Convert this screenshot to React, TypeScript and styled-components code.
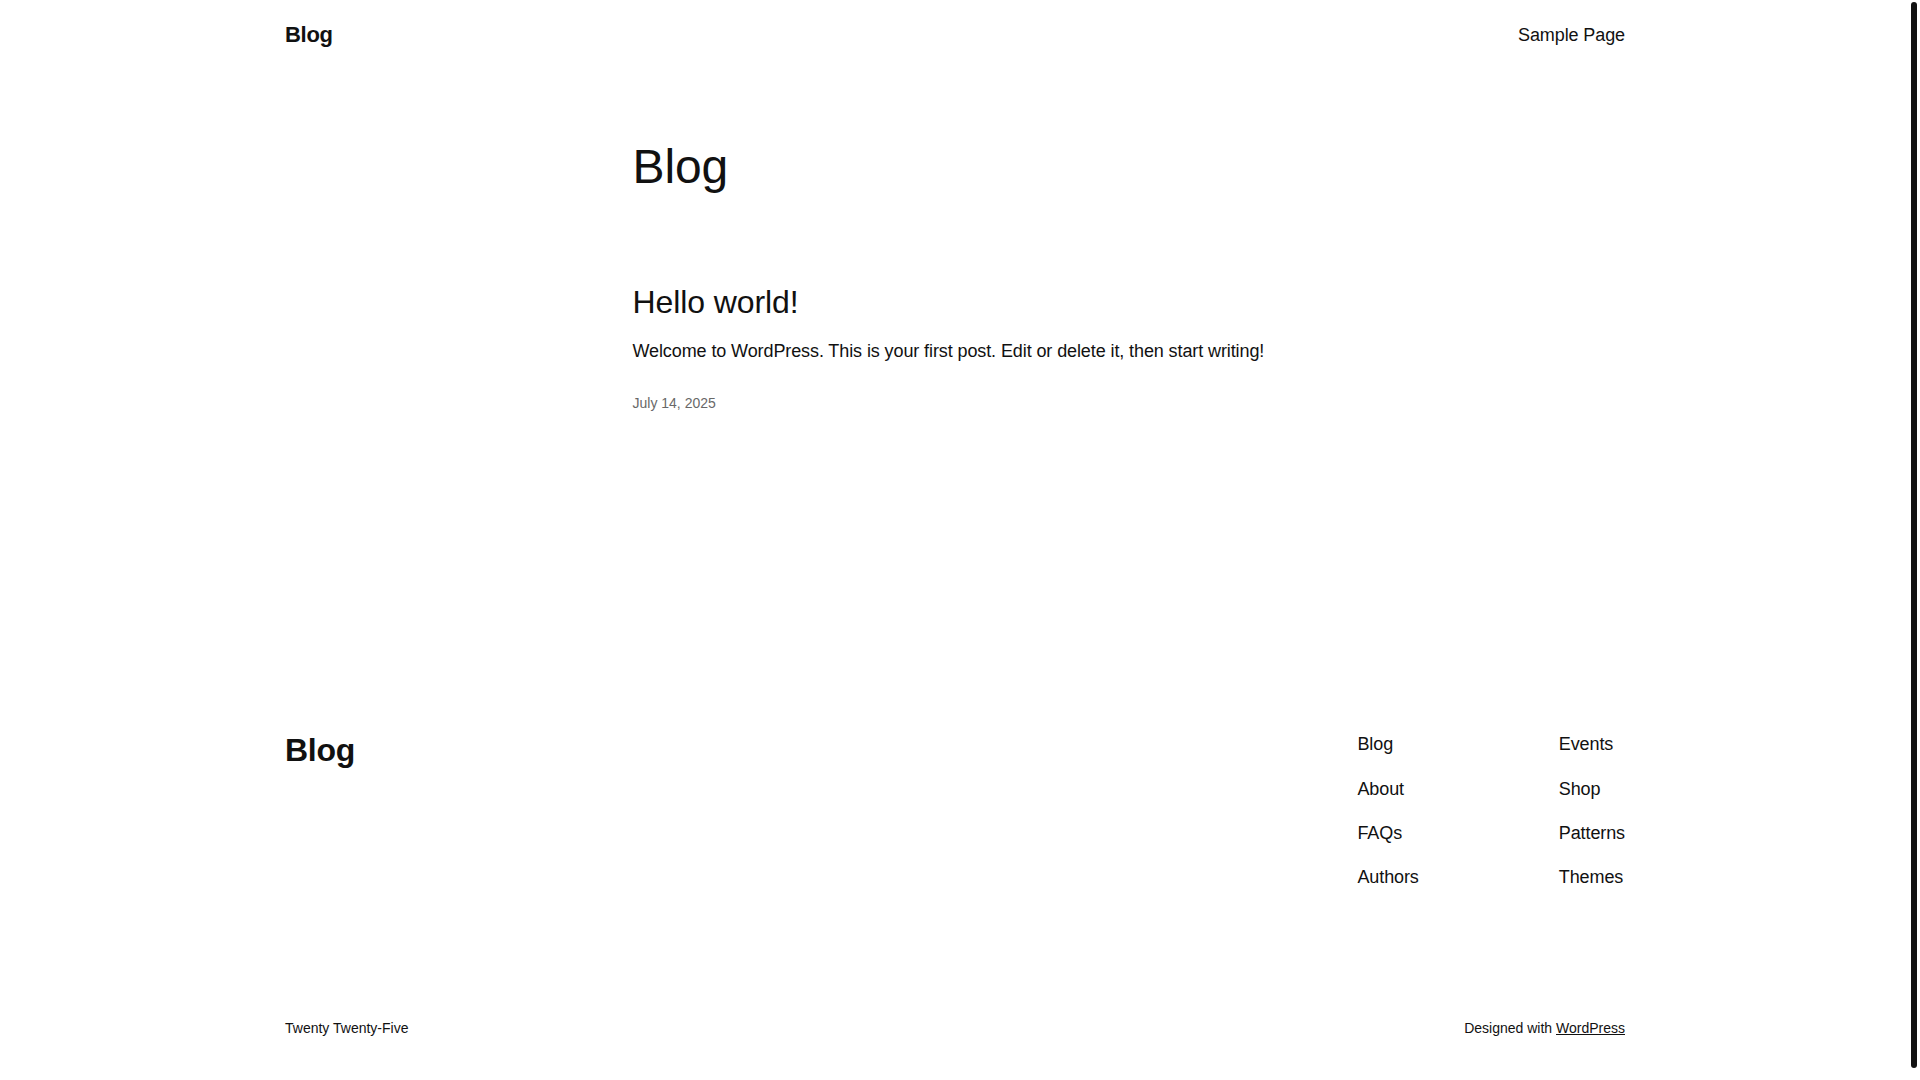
import React from "react";
import styled, { createGlobalStyle } from "styled-components";

const GlobalStyle = createGlobalStyle`
  html, body {
    margin: 0;
    padding: 0;
    background: #ffffff;
    overflow: hidden;
  }
  body {
    font-family: "Liberation Sans", Arial, sans-serif;
    color: #111111;
    letter-spacing: -0.1px;
  }
  *, *::before, *::after {
    box-sizing: border-box;
  }
`;

/* the page area left of a 10px scrollbar gutter */
const Page = styled.div`
  display: flex;
  flex-direction: column;
  width: 1910px;
  min-height: 100vh;
`;

const ScrollThumb = styled.div`
  position: fixed;
  top: 2px;
  right: 3px;
  width: 6px;
  height: 1066px;
  border-radius: 3px;
  background: #111111;
`;

const Wide = styled.div`
  width: 1340px;
  margin: 0 auto;
`;

const Header = styled(Wide).attrs({ as: "header" })`
  display: flex;
  justify-content: space-between;
  align-items: center;
  padding: 20px 0;
`;

const SiteTitle = styled.a<{ $size: number }>`
  font-size: ${(p) => p.$size}px;
  font-weight: 700;
  line-height: ${(p) => (p.$size > 24 ? 1.125 : 1.4)};
  letter-spacing: -0.3px;
  color: #111111;
  text-decoration: none;
`;

const NavLink = styled.a`
  font-size: 18px;
  line-height: 1.4;
  color: #111111;
  text-decoration: none;
`;

const Main = styled.main`
  width: 645px;
  margin: 0 auto;
  padding-top: 69px;
`;

const PageTitle = styled.h1`
  margin: 0 0 90px;
  font-size: 48px;
  font-weight: 400;
  line-height: 1.125;
`;

const Post = styled.article`
  display: flex;
  flex-direction: column;
`;

const PostTitle = styled.h2`
  margin: 0;
  font-size: 32px;
  font-weight: 400;
  line-height: 1.125;
`;

const Excerpt = styled.p`
  margin: 19.5px 0 0;
  font-size: 18px;
  line-height: 1.4;
`;

const PostDate = styled.time`
  margin-top: 29.2px;
  font-size: 14px;
  line-height: 1.4;
  letter-spacing: 0;
  color: #686868;
`;

const Footer = styled(Wide).attrs({ as: "footer" })`
  display: flex;
  flex-direction: column;
  padding-top: 319px;
  padding-bottom: 55px;
`;

const FooterTop = styled.div`
  display: flex;
  justify-content: space-between;
  align-items: flex-start;
`;

const FooterNav = styled.nav`
  display: flex;
  gap: 140px;
`;

const NavColumn = styled.ul`
  display: flex;
  flex-direction: column;
  gap: 19.2px;
  margin: 0;
  padding: 0;
  list-style: none;
`;

const FooterBottom = styled.div`
  display: flex;
  justify-content: space-between;
  align-items: center;
  margin-top: 128px;
  font-size: 14px;
  line-height: 1.4;
  letter-spacing: 0;
`;

const Credit = styled.p`
  margin: 0;
`;

const CreditLink = styled.a`
  color: #111111;
  text-decoration: underline;
`;

const columns = [
  ["Blog", "About", "FAQs", "Authors"],
  ["Events", "Shop", "Patterns", "Themes"],
];

export default function App() {
  return (
    <>
      <GlobalStyle />
      <Page>
        <Header>
          <SiteTitle $size={22} href="#">
            Blog
          </SiteTitle>
          <NavLink href="#">Sample Page</NavLink>
        </Header>

        <Main>
          <PageTitle>Blog</PageTitle>
          <Post>
            <PostTitle>Hello world!</PostTitle>
            <Excerpt>
              Welcome to WordPress. This is your first post. Edit or delete it,
              then start writing!
            </Excerpt>
            <PostDate dateTime="2025-07-14">July 14, 2025</PostDate>
          </Post>
        </Main>

        <Footer>
          <FooterTop>
            <SiteTitle $size={32} href="#">
              Blog
            </SiteTitle>
            <FooterNav>
              {columns.map((col, i) => (
                <NavColumn key={i}>
                  {col.map((item) => (
                    <li key={item}>
                      <NavLink href="#">{item}</NavLink>
                    </li>
                  ))}
                </NavColumn>
              ))}
            </FooterNav>
          </FooterTop>
          <FooterBottom>
            <Credit>Twenty Twenty-Five</Credit>
            <Credit>
              Designed with <CreditLink href="#">WordPress</CreditLink>
            </Credit>
          </FooterBottom>
        </Footer>
      </Page>
      <ScrollThumb aria-hidden="true" />
    </>
  );
}
